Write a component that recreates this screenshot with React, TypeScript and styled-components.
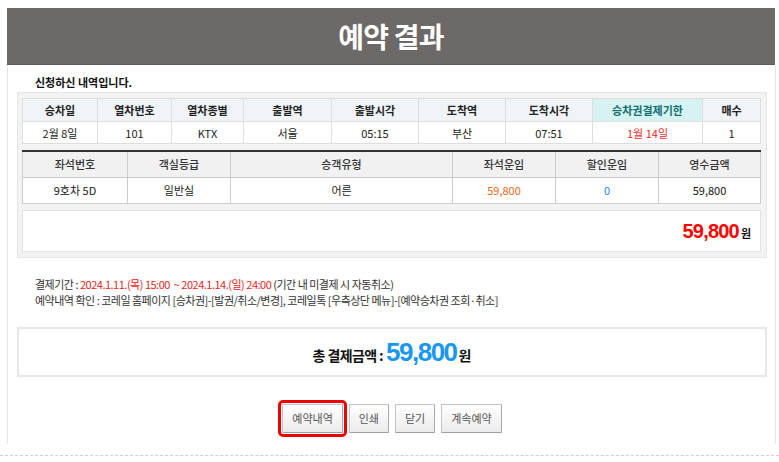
import React from "react";
import styled, { createGlobalStyle } from "styled-components";

const GlobalStyle = createGlobalStyle`
  html, body { margin: 0; padding: 0; background: #fff; }
  body { font-family: "Noto Sans CJK KR", "Noto Sans", sans-serif; color: #222; }
  * { box-sizing: border-box; }
`;

const Page = styled.div`
  padding-top: 8px;
`;

const Frame = styled.div`
  margin-left: 7px;
  width: 769px;
`;

const Header = styled.div`
  height: 57px;
  width: 768px;
  background: #6e6969;
  border-bottom: 1px solid #5e5a5a;
  display: flex;
  align-items: center;
  justify-content: center;
`;

const Title = styled.h1`
  margin: 0;
  color: #fff;
  font-size: 28px;
  font-weight: 700;
  letter-spacing: -0.8px;
  line-height: 1;
`;

const Body = styled.div`
  border-left: 1px solid #e6e6e6;
  border-right: 1px solid #e6e6e6;
  padding: 9px 8px 11px 9px;
  display: flex;
  flex-direction: column;
`;

const Intro = styled.p`
  margin: 0 0 2px 18px;
  font-size: 11px;
  font-weight: 700;
  line-height: 16px;
  color: #111;
`;

const Panel = styled.div`
  background: #f3f3f3;
  border: 1px solid #e6e6e6;
  padding: 5px 5px 5px 4px;
  display: flex;
  flex-direction: column;
  gap: 6px;
`;

const Table = styled.table<{ $top?: boolean }>`
  width: 738px;
  border-collapse: collapse;
  table-layout: fixed;
  background: #fff;
  font-size: 11px;
  border-top: ${(p) => (p.$top ? "2px solid #333" : "none")};
`;

const Th = styled.th<{ $bg?: string; $color?: string; $h: number; $weight?: number; $border: string }>`
  height: ${(p) => p.$h}px;
  padding: 0;
  background: ${(p) => p.$bg || "#f0f4f8"};
  color: ${(p) => p.$color || "#222"};
  font-weight: ${(p) => p.$weight ?? 700};
  border: 1px solid ${(p) => p.$border};
  text-align: center;
  line-height: 14px;
`;

const Td = styled.td<{ $color?: string; $h: number; $border: string; $weight?: number }>`
  height: ${(p) => p.$h}px;
  padding: 0;
  color: ${(p) => p.$color || "#222"};
  border: 1px solid ${(p) => p.$border};
  text-align: center;
  line-height: 14px;
  font-weight: ${(p) => p.$weight ?? 400};
`;

const SumBox = styled.div`
  height: 42px;
  background: #fff;
  border: 1px solid #e2e2e2;
  display: flex;
  align-items: center;
  justify-content: flex-end;
  padding-right: 9px;
`;

const Amount = styled.span<{ $color: string; $size: number; $ls: number }>`
  font-family: "Liberation Sans", Arial, sans-serif;
  font-weight: 700;
  font-size: ${(p) => p.$size}px;
  letter-spacing: ${(p) => p.$ls}px;
  color: ${(p) => p.$color};
  line-height: 1;
`;

const Won = styled.span<{ $size: number }>`
  font-weight: 700;
  font-size: ${(p) => p.$size}px;
  color: #111;
  margin-left: 2px;
  line-height: 1;
`;

const AmountLine = styled.div`
  display: flex;
  align-items: baseline;
`;

const Info = styled.div`
  margin: 18px 0 0 18px;
  font-size: 11px;
  line-height: 16px;
  color: #333;
  letter-spacing: -0.5px;
`;

const Red = styled.span`
  color: #ee1c1c;
`;

const TotalBox = styled.div`
  margin-top: 19px;
  height: 50px;
  border: 2px solid #e8e8e8;
  display: flex;
  align-items: center;
  justify-content: center;
`;

const TotalLabel = styled.span`
  font-size: 14px;
  font-weight: 700;
  color: #111;
  margin-right: 3px;
  letter-spacing: -0.6px;
`;

const Buttons = styled.div`
  margin-top: 27px;
  display: flex;
  justify-content: center;
  gap: 6px;
`;

const Button = styled.button<{ $marked?: boolean }>`
  height: 29px;
  padding: 0 9px;
  font-family: "Noto Sans CJK KR", sans-serif;
  font-size: 11px;
  color: #555;
  background: linear-gradient(#ffffff, #ebebeb);
  border: 1px solid #c4c4c4;
  border-right-color: #a8a8a8;
  border-bottom-color: #a0a0a0;
  border-radius: 1px;
  cursor: pointer;
  outline: ${(p) => (p.$marked ? "3px solid #ee0000" : "none")};
  outline-offset: 1px;
`;

const Dashed = styled.div`
  margin-top: 11px;
  border-top: 1px dashed #cfcfcf;
  width: 779px;
`;

const t1Cols = [75, 74, 72, 88, 87, 87, 87, 110, 58];
const t1Head = ["승차일", "열차번호", "열차종별", "출발역", "출발시각", "도착역", "도착시각", "승차권결제기한", "매수"];
const t1Data = ["2월 8일", "101", "KTX", "서울", "05:15", "부산", "07:51", "1월 14일", "1"];

const t2Cols = [105, 103, 222, 103, 103, 102];
const t2Head = ["좌석번호", "객실등급", "승객유형", "좌석운임", "할인운임", "영수금액"];
const t2Data = ["9호차 5D", "일반실", "어른", "59,800", "0", "59,800"];
const t2Colors = ["#222", "#222", "#222", "#f26522", "#1e88e5", "#111"];

export default function App() {
  return (
    <>
      <GlobalStyle />
      <Page>
        <Frame>
          <Header>
            <Title>예약 결과</Title>
          </Header>
          <Body>
            <Intro>신청하신 내역입니다.</Intro>
            <Panel>
              <Table>
                <colgroup>
                  {t1Cols.map((w, i) => (
                    <col key={i} style={{ width: w }} />
                  ))}
                </colgroup>
                <thead>
                  <tr>
                    {t1Head.map((h, i) => (
                      <Th
                        key={h}
                        $h={23}
                        $border="#dedede"
                        $bg={i === 7 ? "#d6f2f2" : "#f0f4f8"}
                        $color={i === 7 ? "#12706e" : "#222"}
                      >
                        {h}
                      </Th>
                    ))}
                  </tr>
                </thead>
                <tbody>
                  <tr>
                    {t1Data.map((d, i) => (
                      <Td key={i} $h={22} $border="#dedede" $color={i === 7 ? "#f21d1d" : "#222"}>
                        {d}
                      </Td>
                    ))}
                  </tr>
                </tbody>
              </Table>
              <Table $top>
                <colgroup>
                  {t2Cols.map((w, i) => (
                    <col key={i} style={{ width: w }} />
                  ))}
                </colgroup>
                <thead>
                  <tr>
                    {t2Head.map((h) => (
                      <Th key={h} $h={26} $border="#cccccc" $bg="#f1f1f1" $color="#333" $weight={500}>
                        {h}
                      </Th>
                    ))}
                  </tr>
                </thead>
                <tbody>
                  <tr>
                    {t2Data.map((d, i) => (
                      <Td key={i} $h={26} $border="#cccccc" $color={t2Colors[i]}>
                        {d}
                      </Td>
                    ))}
                  </tr>
                </tbody>
              </Table>
              <SumBox>
                <AmountLine>
                  <Amount $color="#ff0000" $size={20} $ls={-0.8}>59,800</Amount>
                  <Won $size={11}>원</Won>
                </AmountLine>
              </SumBox>
            </Panel>
            <Info>
              <div>
                결제기간 : <Red>2024.1.11.(목) 15:00 &nbsp;~ 2024.1.14.(일) 24:00</Red> (기간 내 미결제 시 자동취소)
              </div>
              <div>
                예약내역 확인 : 코레일 홈페이지 [승차권]-[발권/취소/변경], 코레일톡 [우측상단 메뉴]-[예약승차권 조회·취소]
              </div>
            </Info>
            <TotalBox>
              <AmountLine>
                <TotalLabel>총 결제금액 :</TotalLabel>
                <Amount $color="#1a97f0" $size={26} $ls={-1.5}>59,800</Amount>
                <Won $size={14}>원</Won>
              </AmountLine>
            </TotalBox>
            <Buttons>
              <Button $marked>예약내역</Button>
              <Button>인쇄</Button>
              <Button>닫기</Button>
              <Button>계속예약</Button>
            </Buttons>
          </Body>
        </Frame>
        <Dashed />
      </Page>
    </>
  );
}
